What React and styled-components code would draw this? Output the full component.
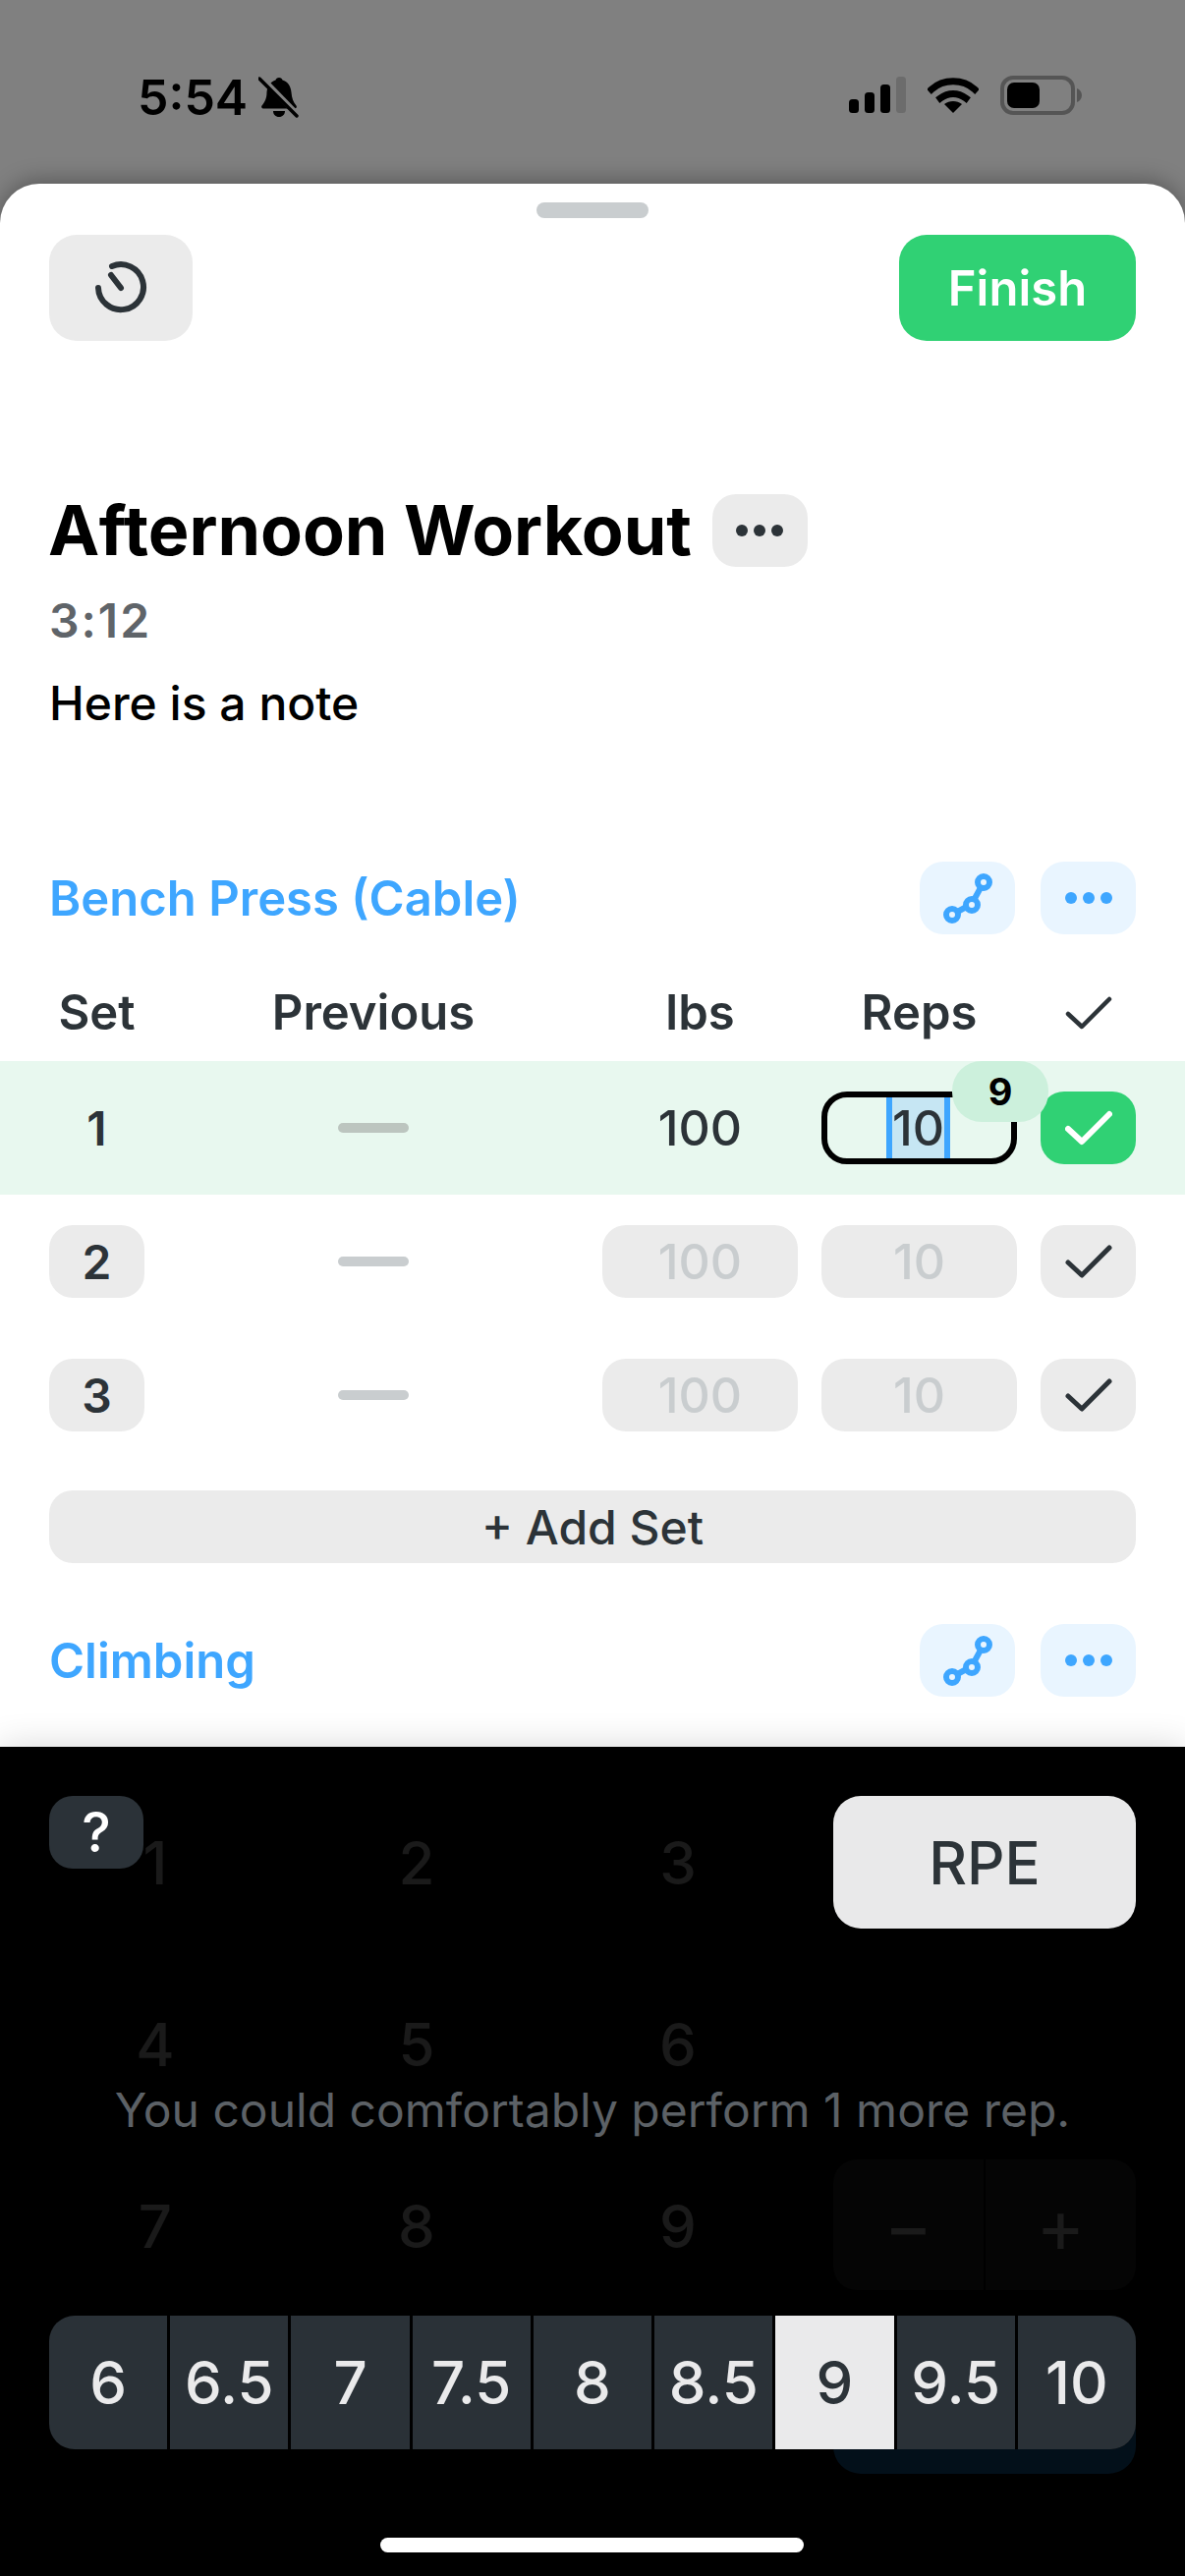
import React from "react";
import styled, { createGlobalStyle } from "styled-components";

const GlobalStyle = createGlobalStyle`
  html, body {
    margin: 0;
    padding: 0;
    background: #000;
  }
  * {
    box-sizing: border-box;
  }
`;

const Page = styled.div`
  width: 1206px;
  height: 2622px;
  display: flex;
  flex-direction: column;
  overflow: hidden;
  background: #808080;
  color: #2c3338;
  font-family: Inter, "Liberation Sans", sans-serif;
`;

const StatusBar = styled.div`
  height: 187px;
  flex: none;
  display: flex;
  justify-content: space-between;
  align-items: flex-start;
  padding: 77px 105px 0 140px;
`;

const StatusGroup = styled.div`
  display: flex;
  align-items: center;
  gap: ${(p) => p.$gap}px;
`;

const Clock = styled.span`
  font-size: 50px;
  line-height: 42px;
  font-weight: 600;
  color: #000;
`;

const Sheet = styled.div`
  flex: 1;
  background: #fff;
  border-radius: 40px 40px 0 0;
  padding: 0 50px;
  overflow: hidden;
  box-shadow: 0 -4px 22px rgba(0, 0, 0, 0.3);
`;

const Handle = styled.div`
  width: 114px;
  height: 16px;
  margin: 19px auto 17px;
  border-radius: 8px;
  background: #c9cdcf;
`;

const TopBar = styled.div`
  display: flex;
  justify-content: space-between;
`;

const TimerButton = styled.div`
  width: 146px;
  height: 108px;
  display: flex;
  align-items: center;
  justify-content: center;
  border-radius: 28px;
  background: #ebebeb;
`;

const FinishButton = styled.div`
  width: 241px;
  height: 108px;
  display: flex;
  align-items: center;
  justify-content: center;
  border-radius: 28px;
  background: #30d174;
  color: #fff;
  font-size: 49px;
  font-weight: 600;
`;

const TitleRow = styled.div`
  margin-top: 156px;
  display: flex;
  align-items: center;
  gap: 21px;
`;

const Title = styled.h1`
  margin: 0 0 0 -1px;
  color: #000;
  font-size: 70px;
  line-height: 74px;
  font-weight: 700;
`;

const MenuButton = styled.div`
  width: 97px;
  height: 74px;
  display: flex;
  align-items: center;
  justify-content: center;
  border-radius: 24px;
  background: ${(p) => (p.$accent ? "#e9f5ff" : "#ebebeb")};
`;

const Duration = styled.div`
  margin-top: 25px;
  height: 60px;
  line-height: 60px;
  font-size: 48px;
  font-weight: 600;
  letter-spacing: 2px;
  color: #5f6469;
`;

const Note = styled.div`
  margin-top: 24px;
  height: 60px;
  line-height: 60px;
  font-size: 48px;
  font-weight: 500;
  color: #000;
`;

const SectionHeader = styled.div`
  margin-top: ${(p) => p.$top}px;
  height: 74px;
  display: flex;
  align-items: center;
  gap: 26px;
`;

const SectionName = styled.div`
  flex: 1;
  font-size: 49px;
  font-weight: 600;
  color: #3ea6ff;
`;

const SetGrid = styled.div`
  display: grid;
  grid-template-columns: 97px 1fr 199px 199px 97px;
  column-gap: 24px;
  align-items: center;
  justify-items: center;
`;

const HeadRow = styled(SetGrid)`
  height: 129px;
  padding-top: 30px;
  font-size: 49px;
  font-weight: 600;
`;

const SetRow = styled(SetGrid)`
  height: 136px;
  margin: 0 -50px;
  padding: 0 50px;
  background: ${(p) => (p.$done ? "#e8f8ef" : "transparent")};
`;

const SetNumber = styled.div`
  width: 97px;
  height: 74px;
  display: flex;
  align-items: center;
  justify-content: center;
  border-radius: 24px;
  font-size: 48px;
  font-weight: 600;
  background: ${(p) => (p.$done ? "transparent" : "#ebebeb")};
`;

const Dash = styled.div`
  width: 72px;
  height: 10px;
  border-radius: 5px;
  background: ${(p) => (p.$done ? "#bcc5bf" : "#c9cdcf")};
`;

const ValueField = styled.div`
  width: 199px;
  height: 74px;
  display: flex;
  align-items: center;
  justify-content: center;
  border-radius: 24px;
  font-size: 50px;
  font-weight: 500;
  background: ${(p) => (p.$done ? "transparent" : "#ebebeb")};
  color: ${(p) => (p.$done ? "#2c3338" : "#c9cdcf")};
`;

const FocusedField = styled.div`
  position: relative;
  width: 199px;
  height: 74px;
  display: flex;
  align-items: center;
  justify-content: center;
  border: 6px solid #000;
  border-radius: 26px;
`;

const Selection = styled.span`
  height: 100%;
  width: 65px;
  margin-right: 2px;
  display: flex;
  align-items: center;
  justify-content: center;
  border-left: 6px solid #3ea6ff;
  border-right: 6px solid #3ea6ff;
  background: #c6e6f3;
  font-size: 50px;
  font-weight: 500;
`;

const RpeBadge = styled.div`
  position: absolute;
  top: -37px;
  right: -38px;
  width: 98px;
  height: 62px;
  display: flex;
  align-items: center;
  justify-content: center;
  border-radius: 30px;
  background: #ccf0dc;
  color: #000;
  font-size: 38px;
  font-weight: 700;
`;

const CheckButton = styled.div`
  width: 97px;
  height: 74px;
  display: flex;
  align-items: center;
  justify-content: center;
  border-radius: 24px;
  background: ${(p) => (p.$done ? "#30d174" : "#ebebeb")};
`;

const AddSet = styled.div`
  margin-top: 29px;
  height: 74px;
  display: flex;
  align-items: center;
  justify-content: center;
  border-radius: 24px;
  background: #ebebeb;
  font-size: 48px;
  font-weight: 500;
`;

const Keyboard = styled.div`
  position: relative;
  flex: none;
  height: 844px;
  padding: 50px;
  display: grid;
  grid-template-columns: 216px 216px 216px 308px;
  grid-auto-rows: 135px;
  gap: 50px;
  background: #000;
  box-shadow: 0 0 34px rgba(0, 0, 0, 0.16);
`;

const GhostKey = styled.div`
  display: flex;
  align-items: center;
  justify-content: center;
  color: #1a1a1a;
  font-size: 60px;
  font-weight: 500;
`;

const RpeKey = styled.div`
  display: flex;
  align-items: center;
  justify-content: center;
  border-radius: 28px;
  background: #e9e9ea;
  font-size: 60px;
  font-weight: 500;
`;

const StepperKey = styled.div`
  display: flex;
  height: 133px;
  border-radius: 24px;
  background: #050505;
  overflow: hidden;
`;

const StepperHalf = styled(GhostKey)`
  flex: 1;
  font-size: 76px;
  font-weight: 400;
  border-left: ${(p) => (p.$divided ? "2px solid #000" : "none")};
`;

const NextKey = styled.div`
  grid-column: 4;
  grid-row: 4;
  border-radius: 28px;
  background: #03101a;
`;

const HelpButton = styled.div`
  position: absolute;
  top: 50px;
  left: 50px;
  width: 96px;
  height: 74px;
  display: flex;
  align-items: center;
  justify-content: center;
  border-radius: 24px;
  background: #2b3238;
  color: #fff;
  font-size: 56px;
  font-weight: 500;
`;

const Hint = styled.div`
  position: absolute;
  top: 340px;
  left: 0;
  right: 0;
  line-height: 60px;
  text-align: center;
  font-size: 48px;
  color: #5c6166;
`;

const Scale = styled.div`
  position: absolute;
  top: 579px;
  left: 50px;
  width: 1106px;
  height: 136px;
  display: grid;
  grid-template-columns: repeat(9, 1fr);
  gap: 3px;
  border-radius: 26px;
  overflow: hidden;
  background: #000;
`;

const ScaleCell = styled.div`
  display: flex;
  align-items: center;
  justify-content: center;
  background: ${(p) => (p.$active ? "#eaeaeb" : "#2a3137")};
  color: ${(p) => (p.$active ? "#2c3338" : "#eaeaeb")};
  font-size: 60px;
  font-weight: 500;
`;

const HomeIndicator = styled.div`
  position: absolute;
  bottom: 24px;
  left: 387px;
  width: 431px;
  height: 15px;
  border-radius: 8px;
  background: #fff;
`;

const BellOffIcon = () => (
  <svg width="42" height="44" viewBox="0 0 42 44">
    <path
      d="M21 2c2 0 3 1 3.500 2.500C30 6 33 11 33.500 17c.5 6 2 10 5 13.500 1 1.500 0 3-1.500 3H5c-1.500 0-2.500-1.500-1.500-3C6.500 27 8.500 23 8.500 17 9 11 12.500 6 17.500 4.500 18 3 19 2 21 2zM15 36h12c0 3.500-2.500 6-6 6s-6-2.500-6-6z"
      fill="#000"
    />
    <path d="M4 3l35 36" stroke="#808080" strokeWidth="6" />
    <path d="M1 3l38 38" stroke="#000" strokeWidth="3.500" strokeLinecap="round" />
  </svg>
);

const SignalIcon = () => (
  <svg width="58" height="38" viewBox="0 0 58 38">
    <rect x="0" y="23" width="10" height="14" rx="3.500" fill="#000" />
    <rect x="16" y="16" width="10" height="21" rx="3.500" fill="#000" />
    <rect x="32" y="8" width="10" height="29" rx="3.500" fill="#000" />
    <rect x="48" y="0" width="10" height="37" rx="3.500" fill="#6c6c6c" />
  </svg>
);

const WifiIcon = () => (
  <svg width="52" height="38" viewBox="0 0 52 38">
    <path d="M4 13C16 2 36 2 48 13" fill="none" stroke="#000" strokeWidth="7" strokeLinecap="square" />
    <path d="M13 22c8-6 18-6 26 0" fill="none" stroke="#000" strokeWidth="7" strokeLinecap="square" />
    <path d="M17 28c5-4 13-4 18 0l-9 9z" fill="#000" />
  </svg>
);

const BatteryIcon = () => (
  <svg width="83" height="40" viewBox="0 0 83 40">
    <rect x="2" y="2" width="72" height="36" rx="11" fill="none" stroke="#555" strokeWidth="4" />
    <rect x="7" y="7" width="33" height="26" rx="7" fill="#000" />
    <path d="M78 13c3 1 5 4 5 7s-2 6-5 7z" fill="#555" />
  </svg>
);

const TimerIcon = () => (
  <svg width="56" height="56" viewBox="0 0 56 56">
    <path
      d="M19 6A23 23 0 1 1 5 28"
      fill="none"
      stroke="#2c3338"
      strokeWidth="6"
      strokeLinecap="round"
    />
    <path d="M28 28L18 15" stroke="#2c3338" strokeWidth="6" strokeLinecap="round" />
  </svg>
);

const DotsIcon = ({ color }) => (
  <svg width="50" height="14" viewBox="0 0 50 14">
    <circle cx="7" cy="7" r="6" fill={color} />
    <circle cx="25" cy="7" r="6" fill={color} />
    <circle cx="43" cy="7" r="6" fill={color} />
  </svg>
);

const ChainIcon = () => (
  <svg width="50" height="52" viewBox="0 0 50 52">
    <path d="M9 43L29 32L41 10" fill="none" stroke="#3ea6ff" strokeWidth="6" />
    <circle cx="9" cy="43" r="6" fill="#e9f5ff" stroke="#3ea6ff" strokeWidth="6" />
    <circle cx="29" cy="33" r="6" fill="#e9f5ff" stroke="#3ea6ff" strokeWidth="6" />
    <circle cx="41" cy="10" r="6" fill="#e9f5ff" stroke="#3ea6ff" strokeWidth="6" />
  </svg>
);

const CheckIcon = ({ color = "#2c3338", weight = 4.500 }) => (
  <svg width="48" height="36" viewBox="0 0 48 36">
    <path
      d="M3 19L17 32L45 4"
      fill="none"
      stroke={color}
      strokeWidth={weight}
      strokeLinecap="round"
      strokeLinejoin="round"
    />
  </svg>
);

const ExerciseActions = () => (
  <>
    <MenuButton $accent>
      <ChainIcon />
    </MenuButton>
    <MenuButton $accent>
      <DotsIcon color="#3ea6ff" />
    </MenuButton>
  </>
);

const rpeValues = ["6", "6.5", "7", "7.5", "8", "8.5", "9", "9.5", "10"];

export default function App() {
  return (
    <Page>
      <GlobalStyle />
      <StatusBar>
        <StatusGroup $gap={11}>
          <Clock>5:54</Clock>
          <BellOffIcon />
        </StatusGroup>
        <StatusGroup $gap={22}>
          <SignalIcon />
          <WifiIcon />
          <BatteryIcon />
        </StatusGroup>
      </StatusBar>

      <Sheet>
        <Handle />
        <TopBar>
          <TimerButton>
            <TimerIcon />
          </TimerButton>
          <FinishButton>Finish</FinishButton>
        </TopBar>

        <TitleRow>
          <Title>Afternoon Workout</Title>
          <MenuButton>
            <DotsIcon color="#2c3338" />
          </MenuButton>
        </TitleRow>
        <Duration>3:12</Duration>
        <Note>Here is a note</Note>

        <SectionHeader $top={131}>
          <SectionName>Bench Press (Cable)</SectionName>
          <ExerciseActions />
        </SectionHeader>

        <HeadRow>
          <span>Set</span>
          <span>Previous</span>
          <span>lbs</span>
          <span>Reps</span>
          <CheckIcon />
        </HeadRow>

        <SetRow $done>
          <SetNumber $done>1</SetNumber>
          <Dash $done />
          <ValueField $done>100</ValueField>
          <FocusedField>
            <Selection>10</Selection>
            <RpeBadge>9</RpeBadge>
          </FocusedField>
          <CheckButton $done>
            <CheckIcon color="#fff" weight={6} />
          </CheckButton>
        </SetRow>

        {["2", "3"].map((n) => (
          <SetRow key={n}>
            <SetNumber>{n}</SetNumber>
            <Dash />
            <ValueField>100</ValueField>
            <ValueField>10</ValueField>
            <CheckButton>
              <CheckIcon weight={5} />
            </CheckButton>
          </SetRow>
        ))}

        <AddSet>+ Add Set</AddSet>

        <SectionHeader $top={62}>
          <SectionName>Climbing</SectionName>
          <ExerciseActions />
        </SectionHeader>
      </Sheet>

      <Keyboard>
        <GhostKey>1</GhostKey>
        <GhostKey>2</GhostKey>
        <GhostKey>3</GhostKey>
        <RpeKey>RPE</RpeKey>
        <GhostKey>4</GhostKey>
        <GhostKey>5</GhostKey>
        <GhostKey>6</GhostKey>
        <div />
        <GhostKey>7</GhostKey>
        <GhostKey>8</GhostKey>
        <GhostKey>9</GhostKey>
        <StepperKey>
          <StepperHalf>−</StepperHalf>
          <StepperHalf $divided>+</StepperHalf>
        </StepperKey>
        <NextKey />

        <HelpButton>?</HelpButton>
        <Hint>You could comfortably perform 1 more rep.</Hint>
        <Scale>
          {rpeValues.map((v) => (
            <ScaleCell key={v} $active={v === "9"}>
              {v}
            </ScaleCell>
          ))}
        </Scale>
        <HomeIndicator />
      </Keyboard>
    </Page>
  );
}
